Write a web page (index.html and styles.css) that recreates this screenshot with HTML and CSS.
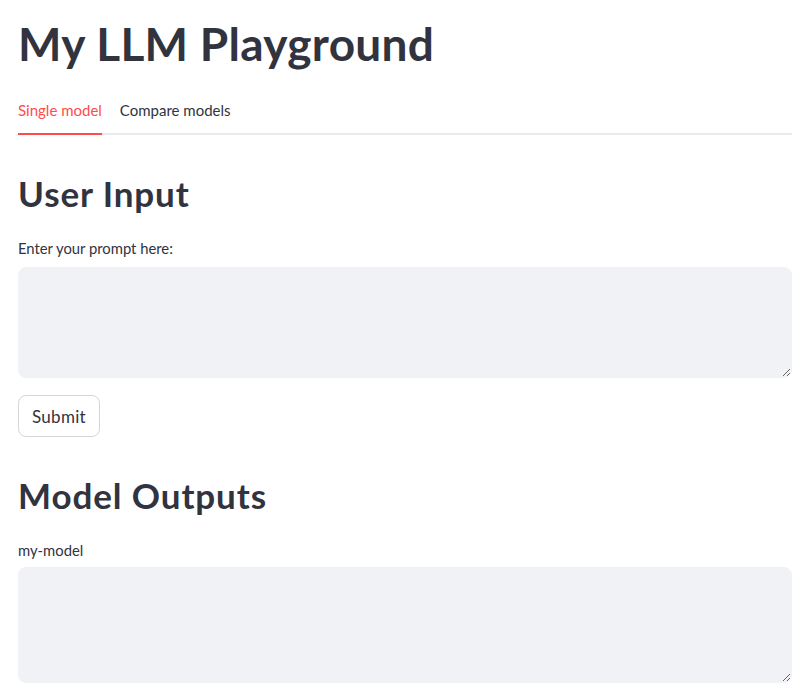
FILE: index.html
```html
<!DOCTYPE html>
<html lang="en">
<head>
<meta charset="utf-8">
<title>My LLM Playground</title>
<link rel="stylesheet" href="styles.css">
</head>
<body>
<main class="page">
  <h1 class="title">My LLM Playground</h1>
  <div class="tabs">
    <button class="tab active">Single model</button>
    <button class="tab">Compare models</button>
  </div>
  <h2 class="section first">User Input</h2>
  <label class="label" for="prompt">Enter your prompt here:</label>
  <textarea id="prompt" class="area area-input"></textarea>
  <button class="submit">Submit</button>
  <h2 class="section second">Model Outputs</h2>
  <label class="label" for="out">my-model</label>
  <textarea id="out" class="area area-output"></textarea>
</main>
</body>
</html>
```

FILE: styles.css
```css
* { box-sizing: border-box; }
html, body { margin: 0; padding: 0; background: #ffffff; }
body {
  font-family: Lato, "Open Sans", sans-serif;
  color: #31333f;
  overflow: hidden;
}
.page {
  display: flex;
  flex-direction: column;
  align-items: flex-start;
  padding: 0 15px 0 18px;
  width: 807px;
}
.title {
  margin: 16px 0 0;
  font-size: 46px;
  line-height: 1.2;
  font-weight: 700;
  letter-spacing: 0.3px;
}
.tabs {
  align-self: stretch;
  display: flex;
  gap: 18px;
  margin-top: 30px;
  border-bottom: 2px solid #eaeaec;
}
.tab {
  font: inherit;
  font-size: 15px;
  line-height: 18px;
  color: #31333f;
  background: none;
  border: none;
  padding: 0 0 14px;
  margin-bottom: -2px;
  border-bottom: 2px solid transparent;
  cursor: pointer;
}
.tab.active {
  color: #ff4b4b;
  border-bottom-color: #ff4b4b;
}
.section {
  margin: 37px 0 0;
  font-size: 35px;
  line-height: 42px;
  font-weight: 700;
  letter-spacing: 0.9px;
}
.label {
  margin-top: 26px;
  font-size: 14.8px;
  line-height: 17px;
}
.area {
  align-self: stretch;
  margin-top: 10px;
  background: #f0f2f6;
  border: 1px solid #f0f2f6;
  border-radius: 8px;
  resize: vertical;
  font: inherit;
  padding: 16px;
  outline: none;
}
.area-input { height: 111px; }
.area-output { height: 116px; margin-top: 8px; }
.submit {
  margin-top: 17px;
  width: 82px;
  height: 42px;
  font: inherit;
  font-size: 17px;
  letter-spacing: 0.3px;
  color: #31333f;
  background: #ffffff;
  border: 1px solid #d6d6d9;
  border-radius: 8px;
  cursor: pointer;
}
.second { margin-top: 37px; }
```
